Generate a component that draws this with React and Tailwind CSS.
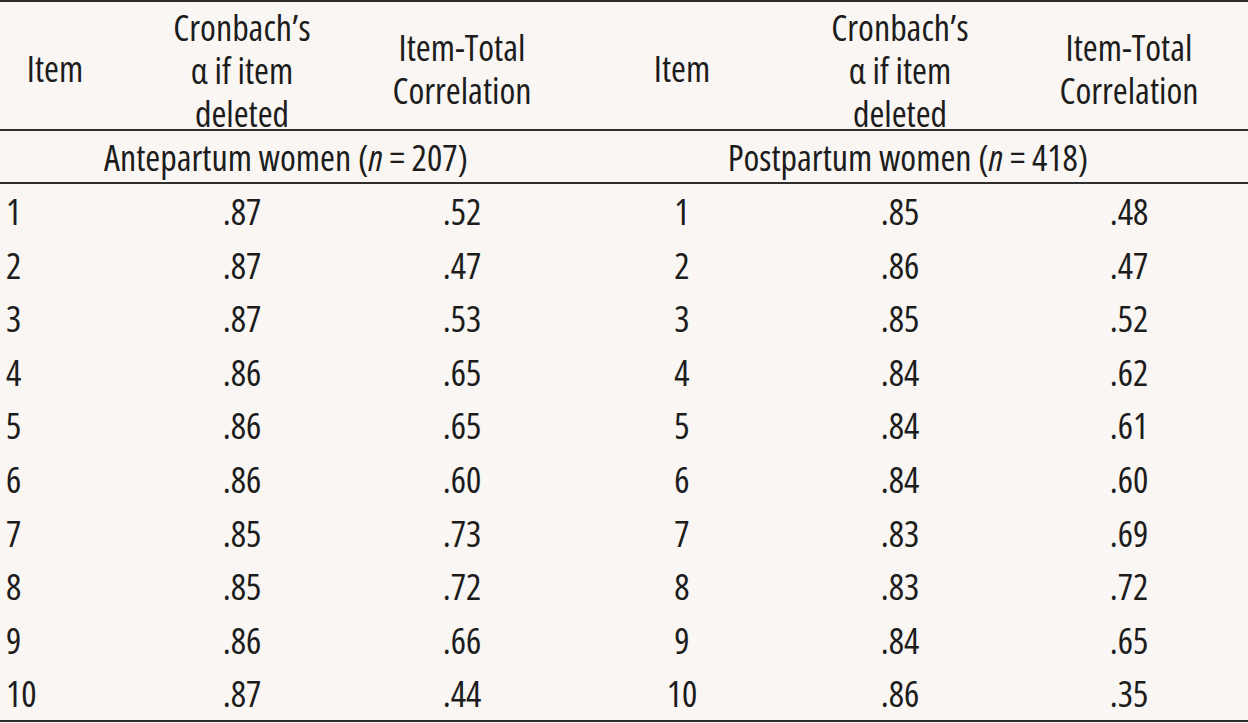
import React from "react";

const left = [
  ["1", ".87", ".52"],
  ["2", ".87", ".47"],
  ["3", ".87", ".53"],
  ["4", ".86", ".65"],
  ["5", ".86", ".65"],
  ["6", ".86", ".60"],
  ["7", ".85", ".73"],
  ["8", ".85", ".72"],
  ["9", ".86", ".66"],
  ["10", ".87", ".44"],
];
const right = [
  ["1", ".85", ".48"],
  ["2", ".86", ".47"],
  ["3", ".85", ".52"],
  ["4", ".84", ".62"],
  ["5", ".84", ".61"],
  ["6", ".84", ".60"],
  ["7", ".83", ".69"],
  ["8", ".83", ".72"],
  ["9", ".84", ".65"],
  ["10", ".86", ".35"],
];

const cols = "grid grid-cols-[110px_264px_176px_32px_200px_236px_222px_8px]";

function Cron() {
  return (
    <div className="flex flex-col items-center leading-[43px] pt-[4px]">
      <span>Cronbach’s</span>
      <span>α if item</span>
      <span>deleted</span>
    </div>
  );
}

function ItemTotal() {
  return (
    <div className="flex flex-col items-center leading-[43px]">
      <span>Item-Total</span>
      <span>Correlation</span>
    </div>
  );
}

function Header() {
  return (
    <div className={`${cols} h-[131px] items-center border-t-2 border-b-2 border-[#2e2e2e]`}>
      <div className="text-center">Item</div>
      <div className="flex justify-center">
        <Cron />
      </div>
      <div className="flex justify-center">
        <ItemTotal />
      </div>
      <div />
      <div className="text-center">Item</div>
      <div className="flex justify-center">
        <Cron />
      </div>
      <div className="flex justify-center">
        <ItemTotal />
      </div>
      <div />
    </div>
  );
}

function Sub() {
  return (
    <div className={`${cols} h-[53px] items-center border-b-2 border-[#2e2e2e]`}>
      <div className="col-span-3 text-center pl-[22px]">
        Antepartum women (<i>n</i> = 207)
      </div>
      <div />
      <div className="col-span-3 text-center pr-[6px]">
        Postpartum women (<i>n</i> = 418)
      </div>
      <div />
    </div>
  );
}

export default function App() {
  return (
    <div className="w-[1248px] h-[723px] bg-[#f9f6f3] text-[#1c1c1c] text-[36px] font-['Open_Sans',sans-serif] font-stretch-condensed overflow-hidden">
      <Header />
      <Sub />
      <div className="border-b-2 border-[#2e2e2e]">
        {left.map((l, i) => (
          <div key={i} className={`${cols} h-[53.6px] items-center pt-[1px]`}>
            <div className="pl-[6px]">{l[0]}</div>
            <div className="text-center">{l[1]}</div>
            <div className="text-center">{l[2]}</div>
            <div />
            <div className="text-center">{right[i][0]}</div>
            <div className="text-center">{right[i][1]}</div>
            <div className="text-center">{right[i][2]}</div>
            <div />
          </div>
        ))}
      </div>
    </div>
  );
}
